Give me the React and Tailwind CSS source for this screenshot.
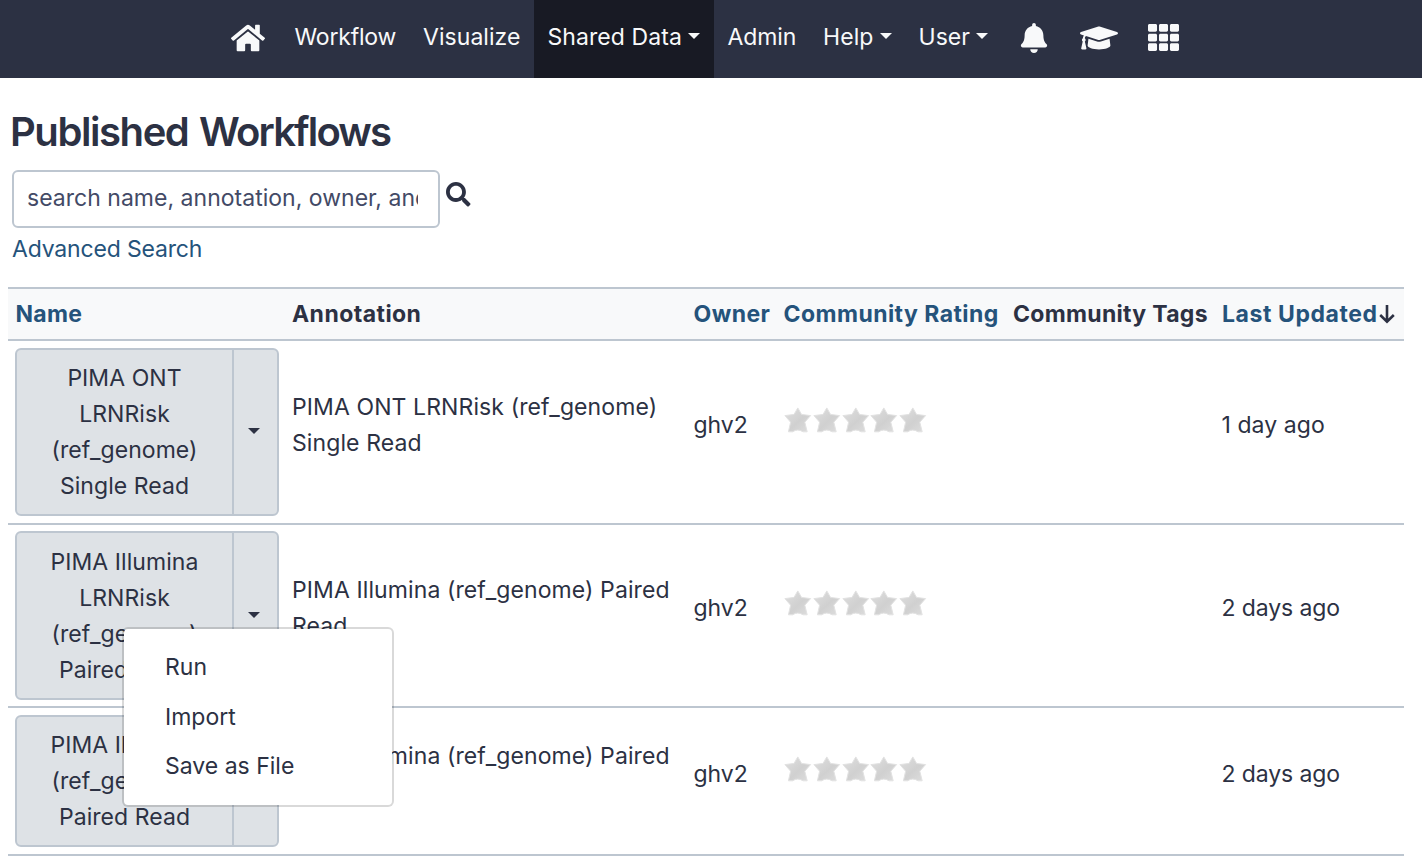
import { FaHome, FaBell, FaGraduationCap, FaSearch, FaTh } from "react-icons/fa";

const STAR =
  "M13.8 0.9 L17.6 7.4 L26.6 8.6 L20.8 15.2 L23.2 24.8 L19 24.8 Q13.8 21.4 8.6 24.8 L4.4 24.8 L6.6 15.2 L0.9 8.6 L10 7.4 Z";

function Caret({ className = "" }) {
  return (
    <svg className={"shrink-0 " + className} width="12" height="6" viewBox="0 0 12 6" fill="currentColor">
      <path d="M0 0H12L6 6Z" />
    </svg>
  );
}

function NavItem({ label, width, caret, active, spacing = "" }) {
  return (
    <a
      className={
        "flex h-[78px] items-start pl-[13.5px] pt-[19px] leading-9 whitespace-nowrap " +
        width + " " + spacing + (active ? " bg-[#181a24]" : "")
      }
    >
      {label}
      {caret && <Caret className="ml-[6px] mt-[14px]" />}
    </a>
  );
}

function NavIcon({ width, children }) {
  return <a className={"flex h-[75px] items-center justify-center " + width}>{children}</a>;
}

function Rating() {
  return (
    <div className="flex h-[26px]">
      {[0, 1, 2, 3, 4].map((i) => (
        <svg key={i} className="w-[28.8px] shrink-0" height="26" viewBox="0 0 28.8 26">
          <defs>
            <linearGradient id={"star" + i} x1="0" y1="0" x2="1" y2="1">
              <stop offset="0" stopColor="#e0e0e0" />
              <stop offset="0.55" stopColor="#d0d0d0" />
              <stop offset="1" stopColor="#dedede" />
            </linearGradient>
          </defs>
          <path d={STAR} fill={"url(#star" + i + ")"} stroke="#e2e2e2" strokeWidth="1" strokeLinejoin="round" />
        </svg>
      ))}
    </div>
  );
}

const GRID = "grid grid-cols-[277px_401.5px_90px_229.5px_208.5px_189.5px]";

function Row({ name, annotation, updated, height, button, menu }) {
  const lift = menu ? "pb-[16px]" : "pb-[14px]";
  return (
    <div className={GRID + " items-center border-b-2 border-[#bdc6d0] " + height}>
      <div className="relative pl-[7px]">
        <div className={"flex w-[264px] overflow-hidden rounded-[6px] border-2 border-[#bdc6d0] bg-[#dee2e6] " + button}>
          <div className="flex w-[217px] flex-col justify-center border-r-2 border-[#bdc6d0] text-center leading-9">
            {name.map((l) => <span key={l}>{l}</span>)}
          </div>
          <div className="flex flex-1 items-center justify-center pr-[3px] pb-[2px]">
            <Caret />
          </div>
        </div>
        {menu && <Menu />}
      </div>
      <div className={"flex flex-col pl-[7px] leading-9 tracking-[0.1px] whitespace-nowrap " + lift}>
        {annotation.map((l) => <span key={l}>{l}</span>)}
      </div>
      <div className={"pl-[7px] leading-9 tracking-[-0.05px] " + lift}>ghv2</div>
      <div className={"pl-[7.5px] " + (menu ? "pb-[25px]" : "pb-[24px]")}><Rating /></div>
      <div />
      <div className={"pl-[7px] leading-9 " + (updated.startsWith("2") ? "tracking-[-0.1px] " : "") + lift}>{updated}</div>
    </div>
  );
}

function Menu() {
  return (
    <div className="absolute top-[96px] left-[114px] z-10 h-[180px] w-[272px] rounded-[6px] border-2 border-black/15 bg-white bg-clip-padding pt-[13.5px]">
      {["Run", "Import", "Save as File"].map((t) => (
        <div key={t} className="flex h-[49.6px] items-center pl-[41px] leading-9 tracking-[0px]">{t}</div>
      ))}
    </div>
  );
}

export default function App() {
  return (
    <div className="h-[860px] w-[1422px] overflow-hidden bg-white font-['Inter',sans-serif] text-[23px] tracking-[0.06px] text-[#2c3143]">
      <nav className="flex h-[78px] bg-[#2c3143] pl-[215px] text-[#f8f9fa]">
        <NavIcon width="w-[66px]"><FaHome size={34} /></NavIcon>
        <NavItem label="Workflow" width="w-[128.5px]" spacing="tracking-[-0.2px]" />
        <NavItem label="Visualize" width="w-[124.5px]" spacing="tracking-[0.05px]" />
        <NavItem label="Shared Data" width="w-[180px]" spacing="tracking-[0.08px]" caret active />
        <NavItem label="Admin" width="w-[95.5px]" spacing="tracking-[-0.12px]" />
        <NavItem label="Help" width="w-[95.5px]" spacing="tracking-[0.1px]" caret />
        <NavItem label="User" width="w-[96px]" spacing="tracking-[0.05px]" caret />
        <NavIcon width="w-[66px]"><FaBell size={30} /></NavIcon>
        <NavIcon width="w-[64px]"><FaGraduationCap size={38} /></NavIcon>
        <NavIcon width="w-[65px]"><FaTh size={31} /></NavIcon>
      </nav>

      <main className="pl-2">
        <h1 className="mt-[30px] pl-[2px] text-[40px] leading-[48px] font-semibold tracking-[-1.43px] [word-spacing:2px]">
          Published <span className="tracking-[-1.85px]">Workflows</span>
        </h1>
        <div className="mt-[14px] flex pl-1">
          <input
            className="h-[58px] w-[428px] rounded-[6px] border-2 border-[#bdc6d0] pr-[20px] pb-[2px] pl-[13px] tracking-[0.02px] placeholder:text-[#434a66] placeholder:opacity-100"
            placeholder="search name, annotation, owner, and tags"
          />
          <FaSearch className="mt-[12px] ml-[6px]" size={24.5} />
        </div>
        <a className="mt-[3px] block pl-1 leading-9 tracking-[-0.17px] text-[#25537b]">Advanced Search</a>

        <section className="mt-[20px] w-[1396px]">
          <div className={GRID + " h-[54px] border-y-2 border-[#bdc6d0] bg-[#f8f9fa] leading-[50px] font-bold tracking-[0.45px] whitespace-nowrap"}>
            <div className="pl-[7.5px] tracking-[0.3px] text-[#25537b]">Name</div>
            <div className="pl-[7px]">Annotation</div>
            <div className="pl-[7px] text-[#25537b]">Owner</div>
            <div className="pl-[7px] text-[#25537b]">Community Rating</div>
            <div className="pl-[7px] tracking-[0.3px]">Community Tags</div>
            <div className="flex items-center pl-[7.5px] tracking-[0.58px] text-[#25537b]">
              Last Updated
              <svg className="ml-px shrink-0 text-[#2c3143]" width="16" height="20" viewBox="0 0 16 20" fill="none" stroke="currentColor" strokeWidth="2.6">
                <path d="M8 1V18M1.2 11L8 17.6L14.8 11" />
              </svg>
            </div>
          </div>
          <Row
            name={["PIMA ONT", "LRNRisk", "(ref_genome)", "Single Read"]}
            annotation={["PIMA ONT LRNRisk (ref_genome)", "Single Read"]}
            updated="1 day ago" height="h-[184px]" button="h-[168px]"
          />
          <Row
            name={["PIMA Illumina", "LRNRisk", "(ref_genome)", "Paired Read"]}
            annotation={["PIMA Illumina (ref_genome) Paired", "Read"]}
            updated="2 days ago" height="h-[183px]" button="h-[169px]" menu
          />
          <Row
            name={["PIMA Illumina", "(ref_genome)", "Paired Read"]}
            annotation={["PIMA Illumina (ref_genome) Paired", "Read"]}
            updated="2 days ago" height="h-[148px]" button="h-[132px]"
          />
        </section>
      </main>
    </div>
  );
}
